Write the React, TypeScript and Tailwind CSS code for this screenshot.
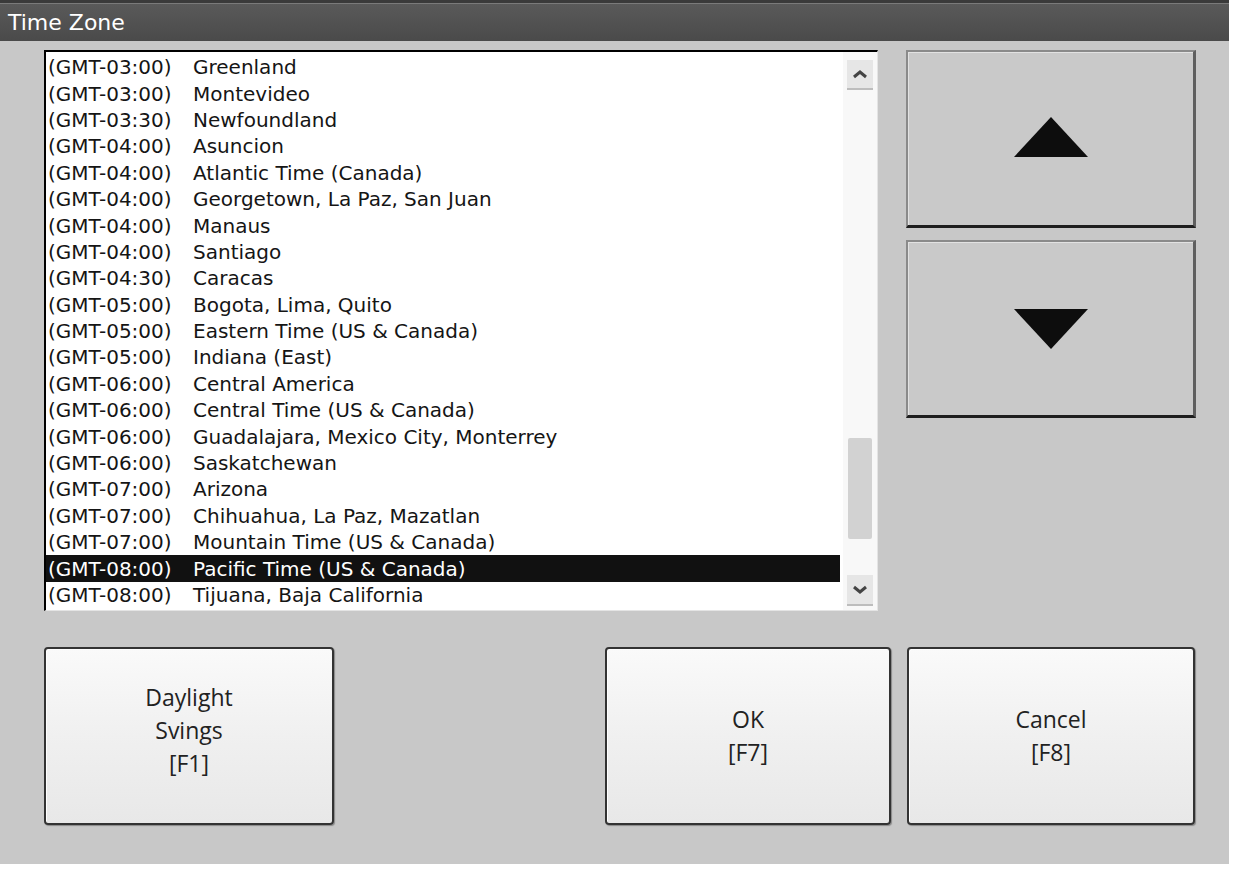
const zones: [string, string][] = [
  ["(GMT-03:00)", "Greenland"],
  ["(GMT-03:00)", "Montevideo"],
  ["(GMT-03:30)", "Newfoundland"],
  ["(GMT-04:00)", "Asuncion"],
  ["(GMT-04:00)", "Atlantic Time (Canada)"],
  ["(GMT-04:00)", "Georgetown, La Paz, San Juan"],
  ["(GMT-04:00)", "Manaus"],
  ["(GMT-04:00)", "Santiago"],
  ["(GMT-04:30)", "Caracas"],
  ["(GMT-05:00)", "Bogota, Lima, Quito"],
  ["(GMT-05:00)", "Eastern Time (US & Canada)"],
  ["(GMT-05:00)", "Indiana (East)"],
  ["(GMT-06:00)", "Central America"],
  ["(GMT-06:00)", "Central Time (US & Canada)"],
  ["(GMT-06:00)", "Guadalajara, Mexico City, Monterrey"],
  ["(GMT-06:00)", "Saskatchewan"],
  ["(GMT-07:00)", "Arizona"],
  ["(GMT-07:00)", "Chihuahua, La Paz, Mazatlan"],
  ["(GMT-07:00)", "Mountain Time (US & Canada)"],
  ["(GMT-08:00)", "Pacific Time (US & Canada)"],
  ["(GMT-08:00)", "Tijuana, Baja California"],
];

const SELECTED = 19;

export default function App() {
  return (
    <div className="min-h-[872px] bg-white">
      <div className="flex h-[864px] w-[1229px] flex-col bg-[#c8c8c8]">
        {/* title bar */}
        <div className="flex h-[41px] items-center border-t-[3px] border-[#3a3a3a] bg-gradient-to-b from-[#5a5a5a] to-[#4a4a4a] pl-[8px] shadow-[inset_0_1px_0_#7a7a7a]">
          <span className="font-['DejaVu_Sans',sans-serif] text-[22px] text-white">Time Zone</span>
        </div>

        <div className="flex flex-col pl-[44px] pt-[9px]">
          <div className="flex gap-[28px]">
            <ZoneList />
            <div className="flex w-[290px] flex-col gap-[12px]">
              <ArrowButton dir="up" />
              <ArrowButton dir="down" />
            </div>
          </div>

          <div className="mt-[36px] flex">
            <ActionButton className="w-[290px] pb-[12px]" lines={["Daylight", "Svings", "[F1]"]} />
            <ActionButton className="ml-[271px] w-[286px]" lines={["OK", "[F7]"]} />
            <ActionButton className="ml-[16px] w-[288px]" lines={["Cancel", "[F8]"]} />
          </div>
        </div>
      </div>
    </div>
  );
}

function ZoneList() {
  return (
    <div className="flex h-[561px] w-[834px] border-l-[2px] border-t-[2px] border-r border-b border-l-black border-t-black border-r-[#e4e4e4] border-b-[#e4e4e4] bg-white">
      <ul className="flex-1 overflow-hidden pt-[2px] font-['DejaVu_Sans',sans-serif] text-[20px] text-[#151515]">
        {zones.map(([off, name], i) => (
          <li
            key={i}
            className={`flex h-[26.4px] items-center pl-[2px] leading-none ${
              i === SELECTED ? "mr-[3px] bg-[#111] text-white" : ""
            }`}
          >
            <span className="w-[145px] shrink-0">{off}</span>
            <span>{name}</span>
          </li>
        ))}
      </ul>
      <div className="flex w-[34px] flex-col items-center bg-[#f8f8f8] pb-[4px] pt-[8px]">
        <div className="flex h-[30px] w-[26px] items-center justify-center border-b-2 border-[#bdbdbd] bg-[#e6e6e6]">
          <svg width="16" height="10" viewBox="0 0 16 10">
            <path d="M2 8 L8 3 L14 8" fill="none" stroke="#444" strokeWidth="3" />
          </svg>
        </div>
        <div className="flex-1" />
        <div className="h-[101px] w-[24px] rounded-[2px] bg-[#d2d2d2]" />
        <div className="h-[36px]" />
        <div className="flex h-[31px] w-[26px] items-center justify-center border-b-2 border-[#bdbdbd] bg-[#e6e6e6]">
          <svg width="16" height="10" viewBox="0 0 16 10">
            <path d="M2 2 L8 7 L14 2" fill="none" stroke="#444" strokeWidth="3" />
          </svg>
        </div>
      </div>
    </div>
  );
}

function ArrowButton({ dir }: { dir: "up" | "down" }) {
  return (
    <div className="flex h-[178px] items-center justify-center border-l-[2px] border-t-[2px] border-r-[3px] border-b-[3px] border-l-[#8a8a8a] border-t-[#8a8a8a] border-r-[#5e5e5e] border-b-[#1e1e1e] bg-[#c9c9c9] shadow-[inset_1px_1px_0_#e2e2e2]">
      <svg width="74" height="40" viewBox="0 0 74 40" className={dir === "up" ? "-mt-[4px]" : ""}>
        {dir === "up" ? (
          <polygon points="37,0 74,40 0,40" fill="#0d0d0d" />
        ) : (
          <polygon points="0,0 74,0 37,40" fill="#0d0d0d" />
        )}
      </svg>
    </div>
  );
}

function ActionButton({ lines, className }: { lines: string[]; className: string }) {
  return (
    <div
      className={`flex h-[178px] flex-col items-center justify-center rounded-[4px] border-[2px] border-[#333] bg-gradient-to-b from-[#fafafa] via-[#f0f0f0] to-[#e8e8e8] font-['Open_Sans',sans-serif] text-[23px] leading-[33px] text-[#222] shadow-[inset_1px_1px_0_#fff,1px_1px_1px_#888] ${className}`}
    >
      {lines.map((l) => (
        <span key={l}>{l}</span>
      ))}
    </div>
  );
}
